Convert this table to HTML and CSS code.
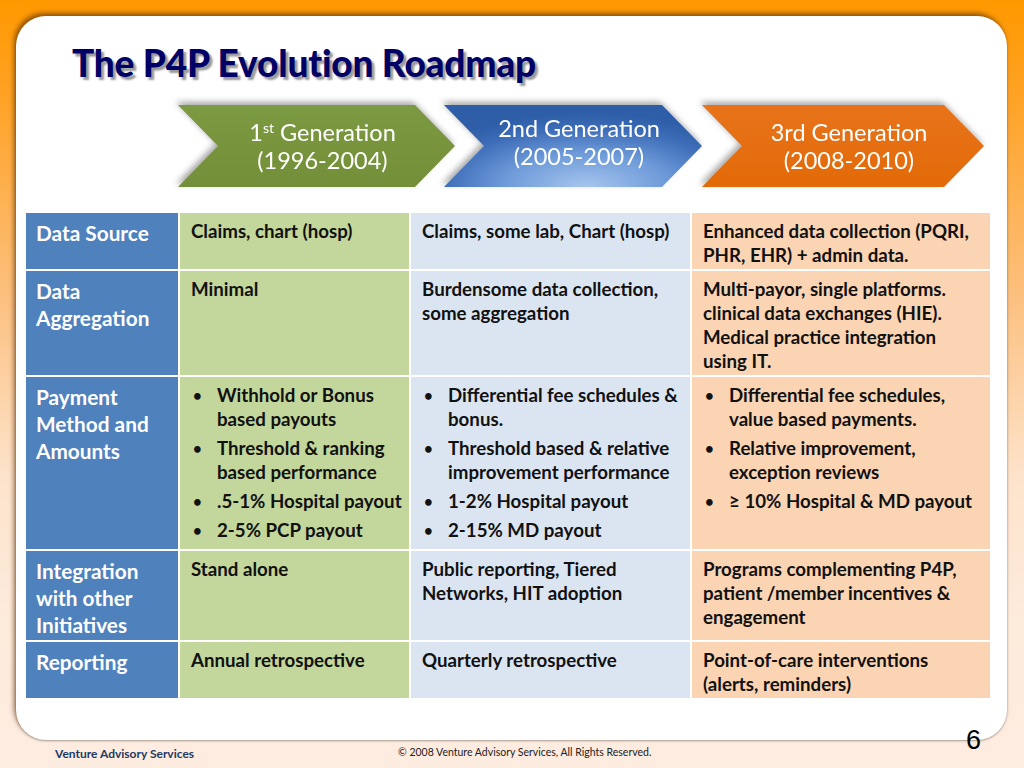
FILE: index.html
```html
<!DOCTYPE html>
<html>
<head>
<meta charset="utf-8">
<link rel="stylesheet" href="styles.css">
</head>
<body>
<div class="slide">
  <div class="panel">
    <h1 class="title">The P4P Evolution Roadmap</h1>
    <div class="chevrons">
      <div class="chev chev-green"><div class="shape"><div class="label"><span>1<sup>st</sup> Generation</span><span>(1996-2004)</span></div></div></div>
      <div class="chev chev-blue"><div class="shape"><div class="label"><span>2nd Generation</span><span>(2005-2007)</span></div></div></div>
      <div class="chev chev-orange"><div class="shape"><div class="label"><span>3rd Generation</span><span>(2008-2010)</span></div></div></div>
    </div>
    <div class="grid">
      <div class="cell head">Data Source</div>
      <div class="cell g1">Claims, chart (hosp)</div>
      <div class="cell g2">Claims, some lab, Chart (hosp)</div>
      <div class="cell g3">Enhanced data collection (PQRI, PHR, EHR) + admin data.</div>

      <div class="cell head">Data<br>Aggregation</div>
      <div class="cell g1">Minimal</div>
      <div class="cell g2">Burdensome data collection, some aggregation</div>
      <div class="cell g3">Multi-payor, single platforms. clinical data exchanges (HIE). Medical practice integration using IT.</div>

      <div class="cell head">Payment<br>Method and<br>Amounts</div>
      <div class="cell g1 list"><ul><li>Withhold or Bonus based payouts</li><li>Threshold &amp; ranking based performance</li><li>.5-1% Hospital payout</li><li>2-5% PCP payout</li></ul></div>
      <div class="cell g2 list"><ul><li>Differential fee schedules &amp; bonus.</li><li>Threshold based &amp; relative improvement performance</li><li>1-2% Hospital payout</li><li>2-15% MD payout</li></ul></div>
      <div class="cell g3 list"><ul><li>Differential fee schedules, value based payments.</li><li>Relative improvement, exception reviews</li><li>≥ 10% Hospital &amp; MD payout</li></ul></div>

      <div class="cell head">Integration<br>with other<br>Initiatives</div>
      <div class="cell g1">Stand alone</div>
      <div class="cell g2">Public reporting, Tiered Networks, HIT adoption</div>
      <div class="cell g3">Programs complementing P4P, patient /member incentives &amp; engagement</div>

      <div class="cell head">Reporting</div>
      <div class="cell g1">Annual retrospective</div>
      <div class="cell g2">Quarterly retrospective</div>
      <div class="cell g3">Point-of-care interventions (alerts, reminders)</div>
    </div>
  </div>
  <div class="pagenum">6</div>
  <div class="footer">
    <span class="brand">Venture Advisory Services</span>
    <span class="copy">© 2008 Venture Advisory Services, All Rights Reserved.</span>
  </div>
</div>
</body>
</html>
```
FILE: styles.css
```css
html, body {
  margin: 0;
  padding: 0;
}
body {
  width: 1024px;
  height: 768px;
  overflow: hidden;
  font-family: Lato, "Open Sans", sans-serif;
}
.slide {
  position: relative;
  width: 1024px;
  height: 768px;
  box-sizing: border-box;
  padding: 16px 17px 0 16px;
  background: linear-gradient(to bottom, #ff9900 0%, #ffa42a 14%, #fcc284 40%, #fde3cb 62%, #fdebdc 80%, #fdece0 100%);
}
.panel {
  height: 724px;
  box-sizing: border-box;
  background: #fff;
  border-radius: 30px;
  box-shadow: -2px -3px 5px rgba(90, 45, 0, 0.65), 0 1px 2px rgba(0, 0, 0, 0.3);
  padding: 25px 18px 0 10px;
}
.title {
  margin: 0 0 0 46px;
  font-family: Lato, sans-serif;
  font-weight: 900;
  font-size: 37px;
  line-height: 44px;
  color: #000066;
  text-shadow: 3px 3px 2px #9a9a9a;
  letter-spacing: -0.2px;
}
.chevrons {
  display: flex;
  margin: 20px 0 0 152px;
  height: 84px;
}
.chev {
  filter: drop-shadow(-2px -3px 3px rgba(0, 0, 0, 0.35));
  height: 82px;
}
.chev .shape {
  height: 100%;
  clip-path: polygon(0 0, calc(100% - 40px) 0, 100% 50%, calc(100% - 40px) 100%, 0 100%, 40px 50%);
  display: flex;
  align-items: center;
  justify-content: center;
  box-sizing: border-box;
  padding-left: 12px;
}
.chev-green { width: 277px; }
.chev-green .shape { background: linear-gradient(to bottom, #7c9a41, #738f39); }
.chev-blue { width: 258px; margin-left: -11px; }
.chev-blue .shape {
  background: radial-gradient(ellipse 70% 90% at 55% 100%, #a6c5ee 0%, #6e9bd9 45%, #3d6cb8 80%, #2f5ea8 100%);
}
.chev-blue .label { margin-top: -8px; }
.chev-orange { width: 282px; }
.chev-orange .shape { background: linear-gradient(to bottom, #e8731a, #e26a08); }
.label {
  display: flex;
  flex-direction: column;
  align-items: center;
  color: #fff;
  font-family: Lato, sans-serif;
  font-size: 23.5px;
  line-height: 28px;
}
.label sup {
  font-size: 14px;
  line-height: 0;
  vertical-align: 8px;
}
.grid {
  margin-top: 24px;
  display: grid;
  grid-template-columns: 152px 229px 279px 298px;
  gap: 2px;
  font-weight: 700;
}
.cell {
  box-sizing: border-box;
  padding: 6px 6px 2px 11px;
  font-size: 18.7px;
  line-height: 24px;
  color: #111;
}
.cell.list { padding-bottom: 7px; }
.head {
  background: #4f81bd;
  color: #fff;
  font-size: 20.8px;
  line-height: 27px;
  padding: 6px 4px 2px 10px;
}
.g1 { background: #c3d69b; }
.g2 { background: #dbe5f1; }
.g3 { background: #fbd4b4; }
ul {
  margin: 0;
  padding: 0;
  list-style: none;
}
li {
  position: relative;
  padding-left: 26px;
  margin-bottom: 5px;
}
li:last-child { margin-bottom: 0; }
li::before {
  content: "•";
  position: absolute;
  left: 2px;
  top: 0;
  font-size: 15px;
}
.pagenum {
  position: absolute;
  left: 966px;
  top: 727px;
  font-family: "Liberation Sans", Arial, sans-serif;
  font-size: 27px;
  line-height: 27px;
  color: #000;
}
.footer {
  position: relative;
  height: 28px;
}
.brand {
  position: absolute;
  left: 39px;
  top: 6px;
  font-family: Lato, sans-serif;
  font-weight: 700;
  font-size: 12px;
  color: #1f3864;
}
.copy {
  position: absolute;
  left: 382px;
  top: 6px;
  font-family: Lato, sans-serif;
  font-size: 10.5px;
  color: #222;
}
```
